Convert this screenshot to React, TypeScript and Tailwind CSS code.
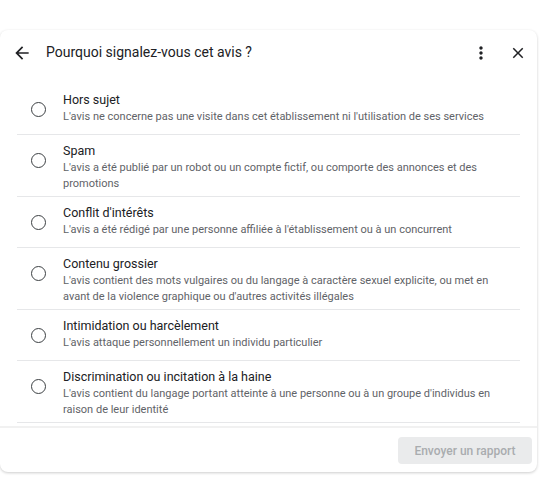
import React from 'react';

const reasons = [
  {
    title: 'Hors sujet',
    text: "L'avis ne concerne pas une visite dans cet établissement ni l'utilisation de ses services",
  },
  {
    title: 'Spam',
    text: "L'avis a été publié par un robot ou un compte fictif, ou comporte des annonces et des promotions",
  },
  {
    title: "Conflit d'intérêts",
    text: "L'avis a été rédigé par une personne affiliée à l'établissement ou à un concurrent",
  },
  {
    title: 'Contenu grossier',
    text: "L'avis contient des mots vulgaires ou du langage à caractère sexuel explicite, ou met en avant de la violence graphique ou d'autres activités illégales",
  },
  {
    title: 'Intimidation ou harcèlement',
    text: "L'avis attaque personnellement un individu particulier",
  },
  {
    title: 'Discrimination ou incitation à la haine',
    text: "L'avis contient du langage portant atteinte à une personne ou à un groupe d'individus en raison de leur identité",
  },
];

const Icon = ({ d, size }: { d: string; size: number }) => (
  <svg width={size} height={size} viewBox="0 0 24 24" fill="#202124">
    <path d={d} />
  </svg>
);

const App = () => {
  return (
    <div
      className="w-[540px] h-[502px] bg-white pt-[30px] overflow-hidden"
      style={{ fontFamily: 'Roboto, "Noto Sans", sans-serif' }}
    >
      <div className="w-[537px] bg-white rounded-lg shadow-[0_1px_3px_rgba(0,0,0,0.2)] flex flex-col">
        <div className="h-[45px] flex items-center pl-[12px] pr-[10px]">
          <Icon size={20} d="M20 11H7.83l5.59-5.59L12 4l-8 8 8 8 1.41-1.41L7.83 13H20v-2z" />
          <h1 className="ml-[14px] text-[14px] text-[#202124] flex-1">Pourquoi signalez-vous cet avis ?</h1>
          <Icon
            size={20}
            d="M12 8c1.1 0 2-.9 2-2s-.9-2-2-2-2 .9-2 2 .9 2 2 2zm0 2c-1.1 0-2 .9-2 2s.9 2 2 2 2-.9 2-2-.9-2-2-2zm0 6c-1.1 0-2 .9-2 2s.9 2 2 2 2-.9 2-2-.9-2-2-2z"
          />
          <div className="ml-[18px]">
            <Icon
              size={18}
              d="M19 6.41L17.59 5 12 10.59 6.41 5 5 6.41 10.59 12 5 17.59 6.41 19 12 13.41 17.59 19 19 17.59 13.41 12z"
            />
          </div>
        </div>
        <div className="pt-[9px] px-[17px]">
          {reasons.map((r) => (
            <div
              key={r.title}
              className="flex min-h-[51px] border-b border-[#e6e7e9] pt-[7px] pb-[4px]"
            >
              <div className="w-[46px] flex justify-center pr-[4px] pt-[11px]">
                <span className="block w-[15px] h-[15px] rounded-full border-[1.6px] border-[#3c4043]" />
              </div>
              <div className="flex-1 pr-[12px]">
                <p className="text-[12.5px] leading-[18px] text-[#202124]">{r.title}</p>
                <p className="text-[11px] leading-[16px] text-[#5f6368]">{r.text}</p>
              </div>
            </div>
          ))}
        </div>
        <div className="mt-[3px] border-t-[2px] border-[#f1f1f1] flex justify-end pt-[9px] pb-[8px] pr-[5px]">
          <button className="w-[134px] h-[27px] rounded-[4px] bg-[#eaebec] text-[12px] font-medium text-[#a9acaf]">
            Envoyer un rapport
          </button>
        </div>
      </div>
    </div>
  );
};

export default App;
